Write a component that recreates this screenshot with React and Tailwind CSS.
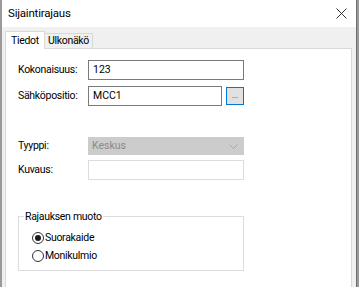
import React from 'react';

const font = { fontFamily: 'Roboto, "Liberation Sans", sans-serif' };

const Label = ({ children }) => (
    <div className="w-[70px] text-[10.5px] tracking-[-0.3px] text-black">{children}</div>
);

const Radio = ({ checked, label }) => (
    <div className="flex items-center h-[18px]">
        <span className="w-[12px] h-[12px] rounded-full border border-[#333] bg-white flex items-center justify-center">
            {checked && <span className="w-[6px] h-[6px] rounded-full bg-[#1a1a1a]" />}
        </span>
        <span className="ml-[1px] text-[10.5px] tracking-[-0.3px] text-black">{label}</span>
    </div>
);

const App = () => {
    return (
        <div className="w-[359px] h-[287px] bg-[#9a9a9a] flex overflow-hidden" style={font}>
            <div className="ml-[2px] w-[355px] h-full bg-[#f0f0f0] flex flex-col border-r border-[#6e6e6e]">
                {/* Title bar */}
                <div className="h-[27px] bg-white flex items-center justify-between pl-[6px] pr-[9px]">
                    <span className="text-[11.5px] tracking-[-0.2px] text-black">Sijaintirajaus</span>
                    <svg width="11" height="11" viewBox="0 0 11 11">
                        <path d="M0.5 0.5 L10.5 10.5 M10.5 0.5 L0.5 10.5" stroke="#333" strokeWidth="1" />
                    </svg>
                </div>

                {/* Tabs */}
                <div className="flex items-end pl-[3px] pt-[4px] h-[21px]">
                    <div className="h-[18px] px-[5px] bg-white border border-b-0 border-[#d9d9d9] text-[10.5px] tracking-[-0.3px] text-black flex items-center relative z-10 -mb-px">Tiedot</div>
                    <div className="h-[15px] px-[3px] bg-[#f0f0f0] border border-b-0 border-l-0 border-[#d9d9d9] text-[10.5px] tracking-[-0.3px] text-black flex items-center">Ulkonäkö</div>
                </div>

                {/* Panel */}
                <div className="ml-[3px] w-[347px] flex-1 bg-white border border-[#d9d9d9] border-b-0 pl-[12px] pt-[11px]">
                    <div className="flex items-center h-[20px]">
                        <Label>Kokonaisuus:</Label>
                        <div className="w-[156px] h-[20px] border border-[#7a7a7a] text-[10.5px] pl-[4px] flex items-center">123</div>
                    </div>
                    <div className="flex items-center h-[20px] mt-[6px]">
                        <Label>Sähköpositio:</Label>
                        <div className="w-[134px] h-[20px] border border-[#7a7a7a] text-[10.5px] pl-[4px] flex items-center">MCC1</div>
                        <div className="ml-[4px] w-[18px] h-[18px] border border-[#0078d7] bg-[#e1e1e1] flex items-end justify-center pb-[4px]">
                            <span className="text-[8px] leading-none text-[#333]">...</span>
                        </div>
                    </div>

                    <div className="flex items-center h-[18px] mt-[31px]">
                        <Label>Tyyppi:</Label>
                        <div className="w-[156px] h-[18px] bg-[#cccccc] text-[10.5px] text-[#8a8a8a] pl-[4px] flex items-center justify-between pr-[6px]">
                            <span>Keskus</span>
                            <svg width="9" height="5" viewBox="0 0 9 5">
                                <path d="M0.5 0.5 L4.5 4.5 L8.5 0.5" stroke="#a8a8a8" fill="none" />
                            </svg>
                        </div>
                    </div>
                    <div className="flex items-center h-[20px] mt-[5px]">
                        <Label>Kuvaus:</Label>
                        <div className="w-[156px] h-[20px] border border-[#dcdcdc]" />
                    </div>

                    <div className="mt-[36px] w-[226px] h-[55px] border border-[#dcdcdc] relative pl-[13px] pt-[12px]">
                        <span className="absolute left-[5px] -top-[8px] bg-white px-[1px] text-[10.5px] tracking-[-0.3px] text-black">Rajauksen muoto</span>
                        <Radio checked label="Suorakaide" />
                        <Radio label="Monikulmio" />
                    </div>
                </div>
            </div>
        </div>
    );
};

export default App;
